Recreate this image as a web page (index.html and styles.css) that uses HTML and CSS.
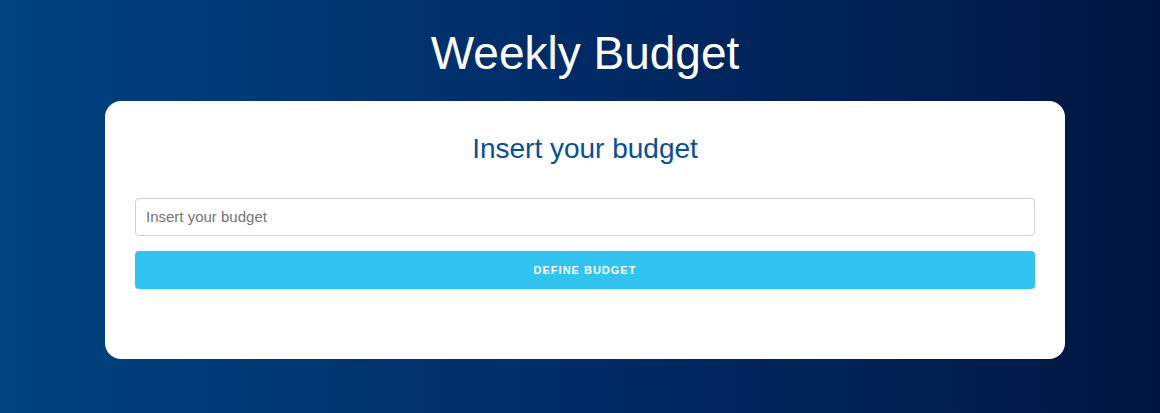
FILE: index.html
```html
<!DOCTYPE html>
<html lang="en">
<head>
<meta charset="utf-8">
<title>Weekly Budget</title>
<link rel="stylesheet" href="styles.css">
</head>
<body>
  <div class="page">
    <h1 class="title">Weekly Budget</h1>
    <div class="card">
      <h2 class="card-title">Insert your budget</h2>
      <form class="budget-form">
        <input class="budget-input" type="text" placeholder="Insert your budget">
        <button class="button-primary" type="button">Define budget</button>
      </form>
    </div>
  </div>
</body>
</html>
```

FILE: styles.css
```css
html, body {
  margin: 0;
  padding: 0;
  height: 100%;
}

body {
  font-family: "Liberation Sans", Arial, Helvetica, sans-serif;
  background: linear-gradient(to right, #00437f 0%, #002b66 50%, #001641 100%);
  color: #222;
}

.page {
  display: flex;
  flex-direction: column;
  align-items: center;
  padding: 26px 0 0 10px;
}

.title {
  margin: 0 0 20px;
  font-size: 46px;
  line-height: 1.2;
  font-weight: normal;
  color: #fff;
}

.card {
  box-sizing: border-box;
  width: 960px;
  background: #fff;
  border-radius: 16px;
  padding: 30px 30px 70px;
  display: flex;
  flex-direction: column;
}

.card-title {
  margin: 0 0 30px;
  font-size: 28px;
  line-height: 1.3;
  font-weight: normal;
  text-align: center;
  color: #0b4f91;
}

.budget-form {
  display: flex;
  flex-direction: column;
  gap: 15px;
  margin: 0;
}

.budget-input {
  box-sizing: border-box;
  height: 38px;
  padding: 6px 10px;
  border: 1px solid #d1d1d1;
  border-radius: 4px;
  font-family: inherit;
  font-size: 15px;
  color: #333;
  background: #fff;
}

.budget-input::placeholder {
  color: #757575;
}

.button-primary {
  height: 38px;
  border: none;
  border-radius: 4px;
  background: #33c3f0;
  color: #fff;
  font-family: inherit;
  font-size: 11px;
  font-weight: bold;
  letter-spacing: 1px;
  text-transform: uppercase;
  cursor: pointer;
}
```
